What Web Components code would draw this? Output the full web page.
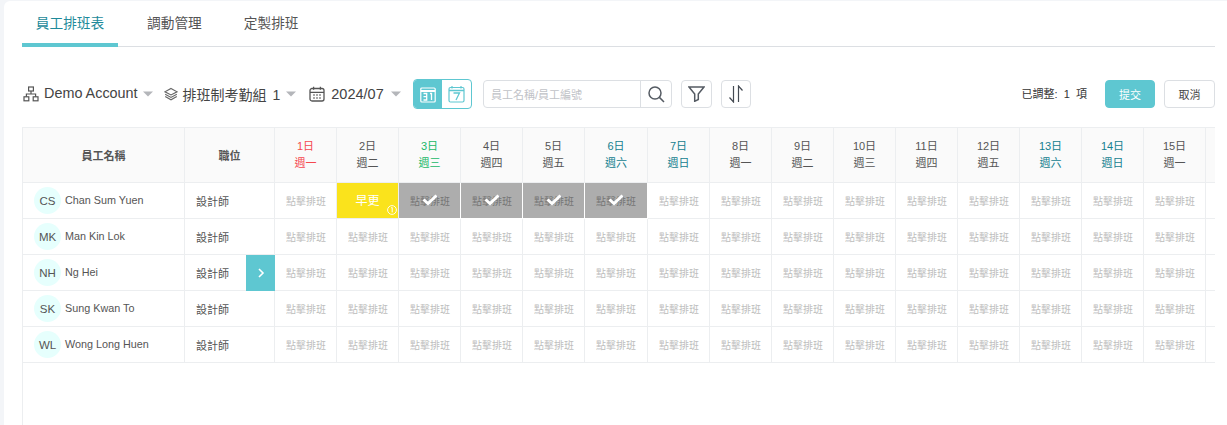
<!DOCTYPE html>
<html lang="zh-Hant"><head><meta charset="utf-8"><title>員工排班表</title>
<style>
html,body{margin:0;height:425px;overflow:hidden;background:#f3f5f8;font-family:"Liberation Sans","Noto Sans CJK TC",sans-serif;color:#555}
</style></head><body>
<x-app></x-app>
<script>
const def=(n,css,html)=>{customElements.define(n,class extends HTMLElement{connectedCallback(){if(this.shadowRoot)return;const s=this.attachShadow({mode:'open'});s.innerHTML=`<style>${css}</style>`+html();}});};
const caret=`<svg width="10" height="6" viewBox="0 0 10 6" style="display:block"><path d="M0 .5h10L5 5.5z" fill="#b4b6ba"/></svg>`;

def('x-tabs',`
:host{display:flex;height:45px;border-bottom:1px solid #dcdfe3;font-size:13.7px;color:#555}
div{text-align:center;line-height:46px;height:46px;box-sizing:border-box;flex:none;white-space:nowrap}
.on{width:96px;margin-right:29px;color:#1e8a9a;border-bottom:4px solid #5ec7d1}
.o{margin-right:42px}
`,()=>`<div class="on">員工排班表</div><div class="o">調動管理</div><div class="o">定製排班</div>`);

def('x-toolbar',`
:host{display:flex;align-items:center;height:30px;margin-top:32px;color:#444}
.p{display:flex;align-items:center;font-size:14px;flex:none;white-space:nowrap;margin-left:1px}
.p svg{flex:none;display:block}
.seg{display:flex;width:59px;height:30px;border:1px solid #5ec7d1;border-radius:4px;box-sizing:border-box;overflow:hidden;margin-left:12px;flex:none}
.seg div{flex:1;display:flex;align-items:center;justify-content:center}
.seg .a{background:#5ec7d1}
.search{display:flex;width:189px;height:28px;margin-left:11px;border:1px solid #dcdfe3;border-radius:4px;box-sizing:border-box;flex:none}
.search .in{flex:1;color:#bfc2c7;line-height:26px;padding-left:7px;white-space:nowrap;overflow:hidden}
.search .in span{display:inline-block;font-size:12px;transform:scale(.9167);transform-origin:0 50%}
.search .b{width:30px;border-left:1px solid #dcdfe3;display:flex;align-items:center;justify-content:center}
.ib{width:31px;height:28px;border:1px solid #dcdfe3;border-radius:4px;box-sizing:border-box;display:flex;align-items:center;justify-content:center;flex:none}
.sp{flex:1}
.cnt{font-size:11px;color:#333;white-space:pre;margin:0 18px 2px 0}
.btn{height:28px;width:50px;border-radius:4px;box-sizing:border-box;font-size:11px;line-height:28px;text-align:center;flex:none;border:1px solid #5ec7d1}
.pri{background:#5ec7d1;color:#fff}
.def{background:#fff;border-color:#dcdfe3;color:#444;width:51px;margin-left:9px}
`,()=>`
<div class="p"><svg width="16" height="16" viewBox="0 0 16 16" fill="none" stroke="#555" stroke-width="1.2" style="margin-right:5px"><rect x="5.6" y="1" width="4.8" height="4"/><rect x="1" y="10.8" width="4.8" height="4"/><rect x="10.2" y="10.8" width="4.8" height="4"/><path d="M8 5v3M3.4 10.8V8h9.2v2.8"/></svg><span style="position:relative;top:-1px;font-size:14.4px">Demo Account</span><span style="margin:0 11px 0 5px">${caret}</span></div>
<div class="p" style="margin:0"><svg width="14" height="14" viewBox="0 0 14 14" fill="none" stroke="#666" stroke-width="1.1" style="margin-right:5px"><path d="M7 1.5 13 4.8 7 8 1 4.8zM1.2 7.2 7 10.4l5.8-3.2M1.2 9.6 7 12.8l5.8-3.2"/></svg><span style="word-spacing:2px">排班制考勤組 1</span><span style="margin:0 13px 0 6px">${caret}</span></div>
<div class="p" style="margin:0"><svg width="16" height="16" viewBox="0 0 16 16" fill="none" stroke="#555" stroke-width="1.3" style="margin-right:6px"><rect x="1" y="2.5" width="14" height="12.5" rx="2"/><path d="M1 6.3h14M4.6 .8v3M11.4 .8v3"/><path d="M4 9h2M7 9h2M10 9h2M4 12h2M7 12h2M10 12h2" stroke-width="1.2"/></svg><span style="font-size:14.5px">2024/07</span><span style="margin:0 0 0 7px">${caret}</span></div>
<div class="seg"><div class="a"><svg width="16" height="17" viewBox="0 0 16 17" fill="none" stroke="#fff" stroke-width="1.2"><rect x=".8" y="2" width="14.4" height="14" rx="1"/><path d="M.8 5h14.4" stroke-width="2"/><path d="M3.5 7.5h3.2v6.5H3.5M3.5 10.7h3.2M10 7.5h1.5V14" stroke-width="1.3"/></svg></div><div><svg width="17" height="18" viewBox="0 0 17 18" fill="none" stroke="#5ec7d1" stroke-width="1.2"><rect x="1" y="2.5" width="15" height="14.5" rx="1.5"/><path d="M1 5.5h15" stroke-width="1.4"/><path d="M4 1v2.5M13 1v2.5"/><path d="M5.5 8h6L8 15" stroke-width="1.3"/></svg></div></div>
<div class="search"><div class="in"><span>員工名稱/員工編號</span></div><div class="b"><svg width="18" height="18" viewBox="0 0 18 18" fill="none" stroke="#555b63" stroke-width="1.5"><circle cx="8" cy="8" r="6"/><path d="M12.4 12.4 17 17"/></svg></div></div>
<div class="ib" style="margin-left:9px"><svg width="17" height="16" viewBox="0 0 17 16" fill="none" stroke="#555b63" stroke-width="1.5"><path d="M1 1h15l-5.7 7v5.5l-3.6 1.8V8z"/></svg></div>
<div class="ib" style="margin-left:9px;width:30px"><svg width="16" height="18" viewBox="0 0 16 18" fill="none" stroke="#444a52" stroke-width="1.2"><path d="M5.5 1v16L1.5 12.5M10.5 17V1l4 4.5"/></svg></div>
<div class="sp"></div>
<div class="cnt">已調整:  1  項</div>
<div class="btn pri">提交</div><div class="btn def">取消</div>`);

const days=[['1日','週一','#f5484f'],['2日','週二'],['3日','週三','#19b868'],['4日','週四'],['5日','週五'],['6日','週六','#14808f'],['7日','週日','#14808f'],['8日','週一'],['9日','週二'],['10日','週三'],['11日','週四'],['12日','週五'],['13日','週六','#14808f'],['14日','週日','#14808f'],['15日','週一']];
const staff=[['CS','Chan Sum Yuen'],['MK','Man Kin Lok'],['NH','Ng Hei'],['SK','Sung Kwan To'],['WL','Wong Long Huen']];

def('x-schedule',`
:host{display:block;border:1px solid #eceef0;border-bottom:none;border-right:none;height:298px;box-sizing:border-box;margin-top:18px;overflow:hidden;position:relative}
.g{display:grid;grid-template-columns:162px 90px repeat(5,62px) 63px repeat(9,62px) 9px;grid-template-rows:55px repeat(5,36px);width:100%}
.c{box-sizing:border-box;border-right:1px solid #eceef0;border-bottom:1px solid #eceef0;display:flex;align-items:center;justify-content:center;font-size:11px;color:#555;min-width:0;position:relative}
.h{background:#fafafa}
.hb{font-weight:bold}
.d{flex-direction:column;line-height:16.5px;padding-bottom:1px}
.n{justify-content:flex-start;padding-left:11px;font-size:10.8px}
.av{width:27px;height:27px;border-radius:50%;background:#e6fffd;font-size:11.5px;display:flex;align-items:center;justify-content:center;margin-right:4px;flex:none;color:#555}
.t{position:relative;top:-.5px;white-space:nowrap}
.pos{justify-content:flex-start;padding-left:11px}
.e{color:#bdbdbd;white-space:nowrap}
.e span{display:inline-block;font-size:12px;transform:scale(.8333);flex:none;margin:0 0 1px 1px}
.y{background:#fae31c;color:#fff;font-size:12px;padding-bottom:2px}
.y svg{position:absolute;right:1px;bottom:3px}
.s{background:#adadad;color:#757575;border-right:1px solid #fff;border-bottom:1px solid #fff}
.s svg{position:absolute;left:23px;top:11px}
.arrow{position:absolute;left:223px;top:127px;width:29px;height:36px;background:#5ec7d1;display:flex;align-items:center;justify-content:center}
`,()=>{
let o='<div class="g"><div class="c h hb">員工名稱</div><div class="c h hb">職位</div>';
days.forEach(d=>{o+=`<div class="c h d" style="color:${d[2]||'#555'}"><span>${d[0]}</span><span>${d[1]}</span></div>`});
o+='<div class="c h" style="border-right:none"></div>';
staff.forEach((p,r)=>{
 o+=`<div class="c n"><span class="av">${p[0]}</span><span class="t">${p[1]}</span></div><div class="c pos">設計師</div>`;
 days.forEach((d,i)=>{
  if(r==0&&i==1)o+='<div class="c y">早更<svg width="10" height="10" viewBox="0 0 10 10" fill="none" stroke="#fff"><circle cx="5" cy="5" r="4.4" stroke-width=".9"/><path d="M4.2 2.8 5.2 2.5V7.4" stroke-width="1"/></svg></div>';
  else if(r==0&&i>1&&i<6)o+='<div class="c e s"><span>點擊排班</span><svg width="16" height="12" viewBox="0 0 16 12"><path d="M1.5 5.5 6 9.5 14.5 1.5" fill="none" stroke="#fff" stroke-width="3"/></svg></div>';
  else o+='<div class="c e"><span>點擊排班</span></div>';
 });
 o+='<div class="c" style="border-right:none"></div>';
});
o+='</div><div class="arrow"><svg width="8" height="10" viewBox="0 0 8 10"><path d="M2 1l4 4-4 4" fill="none" stroke="#fff" stroke-width="1.6"/></svg></div>';
return o;});

def('x-app',`
:host{display:block;box-sizing:border-box;margin:1px 0 0 4px;height:424px;background:#fff;border-radius:6px 0 0 0;padding:0 12px 0 18px;overflow:hidden}
`,()=>`<x-tabs></x-tabs><x-toolbar></x-toolbar><x-schedule></x-schedule>`);
</script>
</body></html>
